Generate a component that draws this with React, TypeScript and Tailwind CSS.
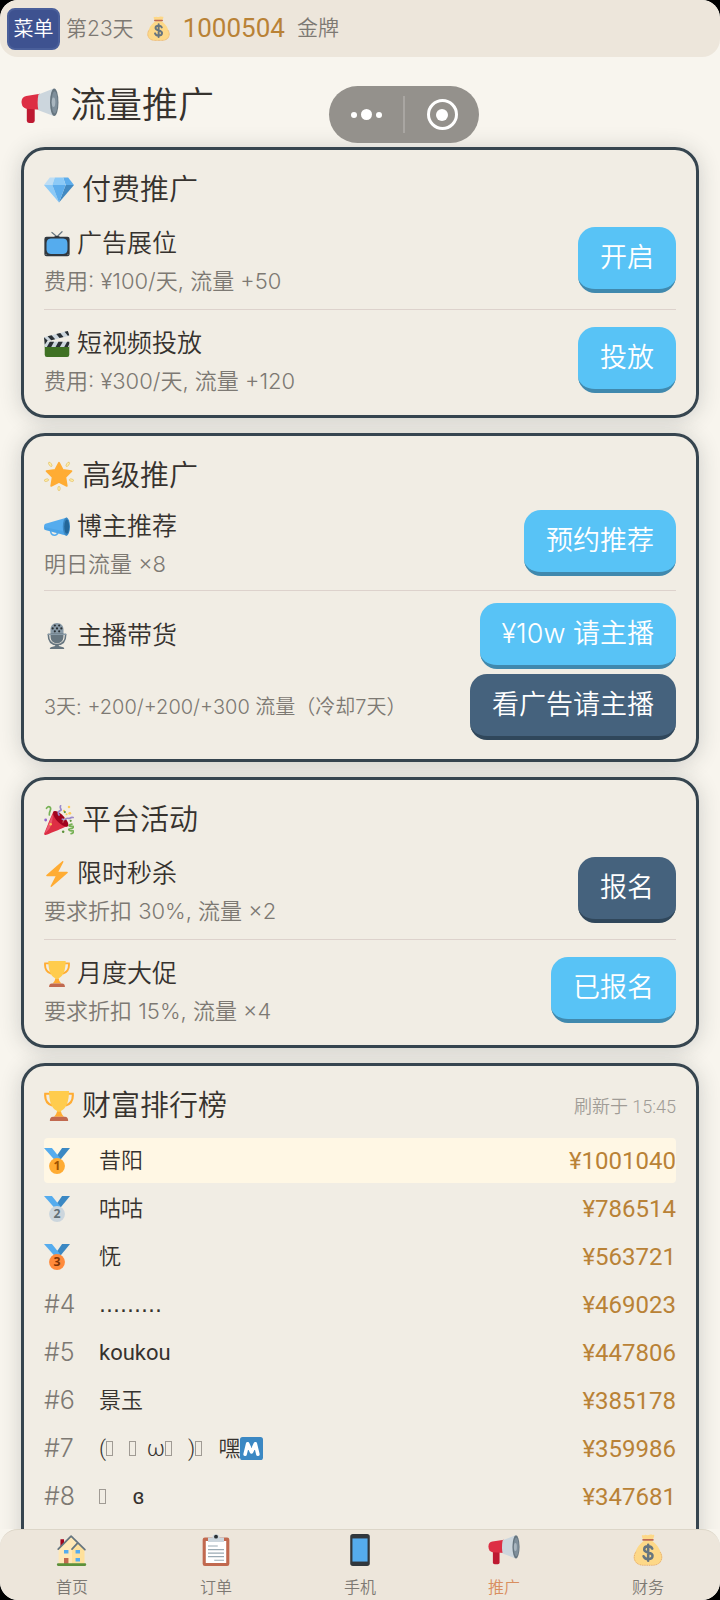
import type { ReactNode } from "react";
import clsx from "clsx";

interface IconProps {
  className?: string;
}

function Svg({ className, children }: { className?: string; children: ReactNode }) {
  return (
    <svg viewBox="0 0 36 36" className={clsx("shrink-0", className)} aria-hidden="true">
      {children}
    </svg>
  );
}

function MoneyBag({ className }: IconProps) {
  return (
    <Svg className={className}>
      <path fill="#FDD888" d="M31.9 19.8C30.600 15 26 9.800 21.500 7H14.500C10 9.800 5.400 15 4.100 19.800 1.500 23.500 1 27.800 3.500 31.200 5.500 34 9 35.500 12.500 35.500h11c3.500 0 7-1.500 9-4.300 2.500-3.400 2-7.700-.6-11.400z" />
      <path fill="none" stroke="#BF6952" strokeWidth=".5" strokeDasharray="1 1" d="M4.500 20C2 24 2 28 4 31c2 3 5 4 8.500 4.200h11C27 35 30 34 32 31c2-3 2-7-.5-11" />
      <path fill="#FDD888" d="M11.500 1c1 .8 2 .3 3 0s2 .5 3.500.3S20.500.2 22 .7s2 .2 2.700.2c.8 0 .3 2.600-1.200 5.100h-11C11 3.500 10.600 1.200 11.500 1z" />
      <rect x="11.500" y="5.500" width="13" height="2" rx="1" fill="#BF6952" />
      <path fill="none" stroke="#67757F" strokeWidth="2.800" strokeLinecap="round" d="M22.800 16.500c-.8-2-2.400-2.600-4.600-2.600-2.700 0-4.500 1.300-4.500 3.400 0 4.600 9.400 2.400 9.400 7.200 0 2.300-2 3.700-4.900 3.700-2.600 0-4.400-1-5.200-3.200M18.200 12v18.200" />
    </Svg>
  );
}

function Loudspeaker({ className }: IconProps) {
  return (
    <Svg className={className}>
      <path fill="#BE1931" d="M5.500 18h7.500v14a2 2 0 0 1-2 2H7.500a2 2 0 0 1-2-2z" />
      <path fill="#DD2E44" d="M18 6.500L5 8.500C2 9 .5 11 .5 14s1.500 6 4.500 6.500l13 1z" />
      <path fill="#CCD6DD" d="M16.500 7L31 1.500v26L16.500 22c-1-4-1-10.500 0-15z" />
      <ellipse cx="31.500" cy="14.500" rx="4" ry="13" fill="#66757F" />
      <ellipse cx="31.800" cy="14.500" rx="2.800" ry="10.500" fill="#7F8F9B" />
      <ellipse cx="30.800" cy="14.500" rx="1.700" ry="4.500" fill="#A9B6BF" />
    </Svg>
  );
}

function Gem({ className }: IconProps) {
  return (
    <Svg className={className}>
      <path fill="#BDDDF4" d="M13 3H7l-7 9h10z" />
      <path fill="#5DADEC" d="M36 12l-7-9h-6l3 9z" />
      <path fill="#4289C1" d="M26 12h10L18 33z" />
      <path fill="#8CCAF7" d="M10 12H0l18 21zm3-9l-3 9h16l-3-9z" />
      <path fill="#5DADEC" d="M18 33l-8-21h16z" />
    </Svg>
  );
}

function Television({ className }: IconProps) {
  return (
    <Svg className={className}>
      <path fill="none" stroke="#66757F" strokeWidth="1.600" strokeLinecap="round" d="M18 8l-7-6M18 8l7-7" />
      <path fill="#31373D" d="M13 9c1-3 9-3 10 0z" />
      <rect x="0.500" y="8" width="35" height="27" rx="3" fill="#31373D" />
      <path fill="#55ACEE" d="M3.500 18c0-6 2.500-7.500 8-7.500h13c5.500 0 8 1.500 8 7.500v7c0 5-2.500 7-8 7h-13c-5.500 0-8-2-8-7z" />
      <circle cx="2.800" cy="32.500" r="1" fill="#66757F" />
      <circle cx="33.200" cy="32.500" r="1" fill="#66757F" />
    </Svg>
  );
}

function Clapper({ className }: IconProps) {
  return (
    <Svg className={className}>
      <path fill="#3F7123" d="M1 20h34v13a3 3 0 0 1-3 3H4a3 3 0 0 1-3-3z" />
      <path fill="#CCD6DD" d="M1 15h34v7H1zM0 8.500L33 0l2 6.500L2 15z" />
      <path fill="#292F33" d="M8 15h6l-4 7H4zM20 15h6l-4 7h-6zM32 15h3v3l-2 4h-5zM5 7.200l5.500-1.400 5 5.500-5.500 1.500zM17 4.100l5.500-1.400 4.500 5.500-5.500 1.500zM28.500 1.200L33 0l2 6-2 .6zM0 8.500L5 13l-4 6z" />
    </Svg>
  );
}

function GlowStar({ className }: IconProps) {
  return (
    <Svg className={className}>
      <g fill="#FFF0A8" stroke="#E3BD62" strokeWidth=".8">
        <ellipse cx="18" cy="33" rx="1.400" ry="2.700" />
        <ellipse cx="3" cy="23" rx="2.700" ry="1.400" transform="rotate(-15 3 23)" />
        <ellipse cx="33" cy="23" rx="2.700" ry="1.400" transform="rotate(15 33 23)" />
        <ellipse cx="7.500" cy="4" rx="1.400" ry="3" transform="rotate(-35 7.500 4)" />
        <ellipse cx="28.500" cy="4" rx="1.400" ry="3" transform="rotate(35 28.500 4)" />
      </g>
      <path fill="#FFAC33" stroke="#FFAC33" strokeWidth="2" strokeLinejoin="round" d="M18 2l4.600 8.700 10.400 1.500-7.300 7.300 1.700 10.400-9.400-4.600-9.400 4.600 1.700-10.400L3 12.200l10.400-1.500z" />
    </Svg>
  );
}

function Megaphone({ className }: IconProps) {
  return (
    <Svg className={className}>
      <path fill="none" stroke="#55ACEE" strokeWidth="2.200" d="M9 22c0 9 10 10 10.500 2" />
      <path fill="#55ACEE" d="M32 5L2 13.500C.5 14 0 16 0 18s.5 4 2 4.300L32 30z" />
      <path fill="#3B94D9" d="M0 18v1c0 2 .8 3 2 3.300L32 30v-5z" opacity=".35" />
      <ellipse cx="31" cy="17.500" rx="5" ry="12.500" fill="#3B88C3" />
      <ellipse cx="31.500" cy="17.500" rx="3.400" ry="9.800" fill="#226699" />
    </Svg>
  );
}

function Microphone({ className }: IconProps) {
  return (
    <Svg className={className}>
      <path fill="#66757F" d="M9 14h18v4c0 6-3 10-9 10s-9-4-9-10z" />
      <path fill="#8899A6" d="M18 0c-5.500 0-9 4-9 9v5h18V9c0-5-3.500-9-9-9z" />
      <path fill="none" stroke="#66757F" strokeWidth="2.200" strokeLinecap="round" d="M6 16c0 9 4 14 12 14s12-5 12-14" />
      <path fill="#66757F" d="M15.500 29h5v3l6 1.500c1.200.5 1.500 1.500 1.500 2.500H8c0-1 .5-2 1.500-2.500l6-1.500z" />
      <rect x="5" y="14.500" width="26" height="2" rx="1" fill="#8899A6" />
      <g fill="#292F33">
        <circle cx="15" cy="3.500" r="1.500" />
        <circle cx="21" cy="3.500" r="1.500" />
        <circle cx="12" cy="7.500" r="1.500" />
        <circle cx="18" cy="7.500" r="1.500" />
        <circle cx="24" cy="7.500" r="1.500" />
        <circle cx="15" cy="11.500" r="1.500" />
        <circle cx="21" cy="11.500" r="1.500" />
      </g>
    </Svg>
  );
}

function PartyPopper({ className }: IconProps) {
  return (
    <Svg className={className}>
      <path fill="#DD2E44" d="M11.500 7.500C10.500 9 0 34.500.2 35c.2.800 1 1.200 2 .9C5 35 29 25 29 24.500z" />
      <path fill="#EA596E" d="M10.500 11L1 33.500c5-3 9.500-9 9.500-22.500z" />
      <path fill="#A0041E" d="M12 7.500c3-1.500 8 2 12 6.500 4 4.500 6.500 9.500 4.500 11.500s-7.500-1-11.500-5-8-11-5-13z" />
      <path fill="none" stroke="#77B255" strokeWidth="2" strokeLinecap="round" d="M3 4c3-4 6-1 4.500 2.500C7 8 6 10 6.500 12M33.500 23c-5 1-4.500 3 0 2.500s1 3-2 3-2 3 2 2.500 2 2.500-1 3.500" />
      <path fill="none" stroke="#9B8ACB" strokeWidth="2" strokeLinecap="round" d="M18 12c-2-3 0-5 2-5.500S18 3.500 20 1M22 17c3 2 4-2 7-1s2-2 6-1" />
      <path fill="#FFE8B6" d="M22 21c1-5 4-9 8-11l1 1.500c-4 2-6 5-8 10z" opacity=".4" />
      <g fill="#FDCB58">
        <circle cx="24" cy="7" r="1.300" />
        <circle cx="30" cy="2.500" r="1.500" />
        <circle cx="31" cy="10" r="1.700" />
        <circle cx="27" cy="11" r="1.200" />
        <circle cx="8" cy="23" r="1.500" />
      </g>
      <circle cx="2" cy="18" r="1.700" fill="#9266CC" />
      <circle cx="25" cy="8.500" r="1.300" fill="#5C913B" />
      <circle cx="23" cy="32" r="1.500" fill="#5C913B" />
      <circle cx="32" cy="19" r="1.300" fill="#5C913B" />
    </Svg>
  );
}

function Bolt({ className }: IconProps) {
  return (
    <Svg className={className}>
      <path
        fill="#FFAC33"
        d="M32.938 15.651C32.792 15.260 32.418 15 32 15H19.925L26.890 1.458c.219-.426.106-.947-.271-1.243C26.437.071 26.218 0 26 0c-.233 0-.466.082-.653.243L18 6.588 3.347 19.243c-.316.273-.43.714-.284 1.105S3.582 21 4 21h12.075L9.110 34.542c-.219.426-.106.947.271 1.243.182.144.401.215.619.215.233 0 .466-.082.653-.243L18 29.412l14.653-12.655c.317-.273.43-.714.285-1.106z"
      />
    </Svg>
  );
}

function Trophy({ className }: IconProps) {
  return (
    <Svg className={className}>
      <path fill="none" stroke="#FFAC33" strokeWidth="2.600" d="M9 3.300H1.500C1 9 2 15 10 17.500M27 3.300h7.500C35 9 34 15 26 17.500" />
      <path fill="#FFCC4D" d="M6 0h24c0 12-3 21-9 23.500-1 1-1 3.500-1 6.500h-4c0-3 0-5.500-1-6.500C9 21 6 12 6 0z" />
      <path fill="#FFAC33" d="M15.500 25h5c.3 1.500 1 3.500 3.500 6H12c2.500-2.500 3.200-4.500 3.500-6z" />
      <path fill="#C1694F" d="M11 31h14c3 0 4 2 4 5H7c0-3 1-5 4-5z" />
    </Svg>
  );
}

function Medal({ place, className }: { place: 1 | 2 | 3; className?: string }) {
  const fill = place === 1 ? "#FFAC33" : place === 2 ? "#CCD6DD" : "#FF8A3B";
  const ink = place === 1 ? "#9E5200" : place === 2 ? "#627077" : "#7C3306";
  return (
    <Svg className={className}>
      <path fill="#3B88C3" d="M25 0h11L23 16h-9z" />
      <path fill="#55ACEE" d="M0 0h11l12 15-8 2z" />
      <circle cx="18" cy="25" r="11" fill={fill} />
      <text x="18" y="31" textAnchor="middle" fontSize="17" fontWeight="700" fontFamily="Open Sans, sans-serif" fill={ink}>
        {place}
      </text>
    </Svg>
  );
}

function House({ className }: IconProps) {
  return (
    <Svg className={className}>
      <path fill="#A0041E" d="M5 6h4v9H5z" />
      <path fill="#FFE8B6" d="M3 16L17 3l15 14v17H3z" />
      <path fill="#FFD983" d="M18 18l7-7 7 7v16H18z" opacity=".55" />
      <path fill="none" stroke="#66757F" strokeWidth="2" strokeLinecap="round" strokeLinejoin="round" d="M2.500 17L17 2.500l15.500 15M18 17l6.500-7" />
      <path fill="#55ACEE" d="M9 18h5v4H9zM22 18h5v4h-5zM22 27h5v4h-5z" />
      <path fill="#C1694F" d="M9 27h5v7H9z" />
      <rect x="1" y="33" width="33" height="3" rx="1.300" fill="#5C913B" />
    </Svg>
  );
}

function Clipboard({ className }: IconProps) {
  return (
    <Svg className={className}>
      <rect x="3" y="4" width="30" height="32" rx="2.500" fill="#C1694F" />
      <path fill="#FFF" d="M6.500 8h23v24.500h-23z" />
      <path fill="#CCD6DD" d="M9 4h5c0-5 8-5 8 0h5v5H9z" />
      <circle cx="18" cy="3" r="2.200" fill="#292F33" />
      <path stroke="#9AAAB4" strokeWidth="1.300" d="M9 13.500h11M9 17.500h18M9 21.500h18M9 25.500h18M16 29.500h11" />
    </Svg>
  );
}

function Phone({ className }: IconProps) {
  return (
    <Svg className={className}>
      <rect x="7" y="0" width="22" height="36" rx="3" fill="#31373D" />
      <path fill="#55ACEE" d="M9.500 5h17v26h-17z" />
    </Svg>
  );
}

function LetterM({ className }: IconProps) {
  return (
    <Svg className={className}>
      <rect width="36" height="36" rx="4" fill="#3B88C3" />
      <path fill="none" stroke="#FFF" strokeWidth="5.500" strokeLinecap="round" strokeLinejoin="round" d="M8 27L12 10.500l6 13 6-13L28 27" />
    </Svg>
  );
}

// box shown for a character the font does not have
function MissingGlyph() {
  return <i className="inline-block h-[15px] w-[7px] border border-[#a09b94]" />;
}

function ActionButton({ dark, children }: { dark?: boolean; children: ReactNode }) {
  return (
    <button
      type="button"
      className={clsx(
        "h-[66px] shrink-0 rounded-[17px] border-b-4 px-[22px] font-['Inter','Noto_Sans_CJK_SC',sans-serif] text-[27px] leading-8 text-white",
        dark ? "border-[#30475b] bg-[#45627d]" : "border-[#4089ae] bg-[#58c3f6]",
      )}
    >
      {children}
    </button>
  );
}

interface CardProps {
  icon: ReactNode;
  title: string;
  aside?: ReactNode;
  children: ReactNode;
}

function Card({ icon, title, aside, children }: CardProps) {
  return (
    <section className="rounded-[24px] border-3 border-[#36454f] bg-[#f1ede4] px-5 pt-5 pb-[5px] shadow-[0_2px_22px_rgba(40,50,50,0.2)]">
      <div className="flex h-10 items-center gap-2">
        {icon}
        <h2 className="text-[29px] leading-[42px] text-[#36322e]">{title}</h2>
        {aside}
      </div>
      {children}
    </section>
  );
}

interface PromoProps {
  icon: ReactNode;
  name: string;
  note: string;
  divider?: boolean;
  compact?: boolean;
  children: ReactNode;
}

function Promo({ icon, name, note, divider, compact, children }: PromoProps) {
  return (
    <div
      className={clsx(
        "flex items-center justify-between",
        compact ? "h-[95px]" : "h-[100px]",
        divider && "border-b border-[#ddd2cc]",
      )}
    >
      <div className="pt-1">
        <h3 className="flex items-center gap-[7px] text-[25px] leading-[38px] text-[#36322e]">
          {icon}
          {name}
        </h3>
        <p className="font-['Inter','Noto_Sans_CJK_SC',sans-serif] text-[22px] leading-9 text-[#7d7973]">{note}</p>
      </div>
      {children}
    </div>
  );
}

const ranking: { name: ReactNode; amount: string }[] = [
  { name: "昔阳", amount: "¥1001040" },
  { name: "咕咕", amount: "¥786514" },
  { name: "怃", amount: "¥563721" },
  { name: <span className="font-['DejaVu_Sans',sans-serif] font-normal">.........</span>, amount: "¥469023" },
  { name: <span className="font-normal">koukou</span>, amount: "¥447806" },
  { name: "景玉", amount: "¥385178" },
  {
    name: (
      <>
        (<MissingGlyph />{"   "}<MissingGlyph />{"  "}ω<MissingGlyph />{"   "})<MissingGlyph />{"   "}嘿
        <LetterM className="inline-block h-[23px] w-[23px] align-[-4px]" />
      </>
    ),
    amount: "¥359986",
  },
  { name: <><MissingGlyph />{"     "}ɞ</>, amount: "¥347681" },
];

const tabs = [
  { label: "首页", Icon: House },
  { label: "订单", Icon: Clipboard },
  { label: "手机", Icon: Phone },
  { label: "推广", Icon: Loudspeaker, active: true },
  { label: "财务", Icon: MoneyBag },
];

export default function App() {
  return (
    <div className="h-screen bg-black font-['Roboto','Noto_Sans_CJK_SC',sans-serif] font-[350]">
      <div className="relative flex h-full flex-col overflow-hidden rounded-[18px] bg-[#f8f5ee]">
        {/* Status bar */}
        <header className="flex h-[57px] shrink-0 items-center rounded-[18px] bg-[#ede6db] px-[7px] text-[21px] text-[#7d7973]">
          <button type="button" className="h-[42px] w-[53px] rounded-lg border-2 border-[#4a5f9a] bg-[#3e5290] text-[20px] text-white">
            菜单
          </button>
          <span className="ml-[6px] font-['Inter','Noto_Sans_CJK_SC',sans-serif]">第23天</span>
          <MoneyBag className="ml-3 h-[25px] w-[25px]" />
          <span className="ml-3 text-[26px] font-normal text-[#b98236]">1000504</span>
          <span className="ml-3">金牌</span>
        </header>

        {/* Mini-program capsule */}
        <div className="absolute top-[86px] left-[329px] flex h-[57px] w-[150px] items-center rounded-full bg-[#94918c]">
          <button type="button" aria-label="更多" className="flex h-full flex-1 items-center justify-center gap-1">
            <i className="h-[6px] w-[6px] rounded-full bg-white" />
            <i className="h-[11px] w-[11px] rounded-full bg-white" />
            <i className="h-[6px] w-[6px] rounded-full bg-white" />
          </button>
          <i className="h-[37px] w-[2px] bg-[#a9a6a2]" />
          <button type="button" aria-label="关闭" className="flex h-full flex-1 items-center justify-center">
            <span className="flex h-[31px] w-[31px] items-center justify-center rounded-full border-3 border-white">
              <i className="h-3 w-3 rounded-full bg-white" />
            </span>
          </button>
        </div>

        <main className="min-h-0 flex-1 overflow-hidden px-[21px] pt-6">
          <h1 className="mb-4 flex h-[50px] items-center gap-[11px] text-[36px] text-[#36322e]">
            <Loudspeaker className="h-[38px] w-[38px]" />
            流量推广
          </h1>

          <div className="flex flex-col gap-[15px]">
            <Card icon={<Gem className="h-[30px] w-[30px]" />} title="付费推广">
              <Promo icon={<Television className="h-[26px] w-[26px]" />} name="广告展位" note="费用: ¥100/天, 流量 +50" divider>
                <ActionButton>开启</ActionButton>
              </Promo>
              <Promo icon={<Clapper className="h-[26px] w-[26px]" />} name="短视频投放" note="费用: ¥300/天, 流量 +120">
                <ActionButton>投放</ActionButton>
              </Promo>
            </Card>

            <Card icon={<GlowStar className="h-[30px] w-[30px]" />} title="高级推广">
              <Promo icon={<Megaphone className="h-[26px] w-[26px]" />} name="博主推荐" note="明日流量 ×8" divider compact>
                <ActionButton>预约推荐</ActionButton>
              </Promo>
              <div className="flex flex-col gap-[5px] pt-3 pb-[14px]">
                <div className="flex items-center justify-between">
                  <h3 className="flex items-center gap-[7px] text-[25px] text-[#36322e]">
                    <Microphone className="h-[26px] w-[26px]" />
                    主播带货
                  </h3>
                  <ActionButton>¥10w 请主播</ActionButton>
                </div>
                <div className="flex items-center justify-between">
                  <p className="font-['Inter','Noto_Sans_CJK_SC',sans-serif] text-[20px] text-[#7d7973]">
                    3天: +200/+200/+300 流量（冷却7天）
                  </p>
                  <ActionButton dark>看广告请主播</ActionButton>
                </div>
              </div>
            </Card>

            <Card icon={<PartyPopper className="h-[30px] w-[30px]" />} title="平台活动">
              <Promo icon={<Bolt className="h-[26px] w-[26px]" />} name="限时秒杀" note="要求折扣 30%, 流量 ×2" divider>
                <ActionButton dark>报名</ActionButton>
              </Promo>
              <Promo icon={<Trophy className="h-[26px] w-[26px]" />} name="月度大促" note="要求折扣 15%, 流量 ×4">
                <ActionButton>已报名</ActionButton>
              </Promo>
            </Card>

            <Card
              icon={<Trophy className="h-[30px] w-[30px]" />}
              title="财富排行榜"
              aside={<span className="ml-auto text-[18px] text-[#a09c96]">刷新于 15:45</span>}
            >
              <ol className="mt-3 flex flex-col gap-[3px] pb-12">
                {ranking.map(({ name, amount }, i) => (
                  <li key={amount} className={clsx("flex h-[45px] items-center rounded", i === 0 && "bg-[#fff7e4]")}>
                    <span className="w-[55px] font-['Inter',sans-serif] text-[25px] text-[#7d7973]">
                      {i < 3 ? <Medal place={(i + 1) as 1 | 2 | 3} className="h-[26px] w-[26px]" /> : `#${i + 1}`}
                    </span>
                    <span className="text-[22px] whitespace-pre text-[#36322e]">{name}</span>
                    <span className="ml-auto text-[24px] font-normal text-[#b98236]">{amount}</span>
                  </li>
                ))}
              </ol>
            </Card>
          </div>
        </main>

        {/* Tab bar */}
        <nav className="grid h-[71px] shrink-0 grid-cols-5 rounded-[18px] border-t border-[#dcd6c8] bg-[#ede6db]">
          {tabs.map(({ label, Icon, active }) => (
            <a
              key={label}
              href="#"
              className={clsx("flex flex-col items-center pt-1 text-[16px] leading-6", active ? "text-[#d98e5f]" : "text-[#7d7973]")}
            >
              <Icon className="mb-[10px] h-8 w-8" />
              {label}
            </a>
          ))}
        </nav>
      </div>
    </div>
  );
}
